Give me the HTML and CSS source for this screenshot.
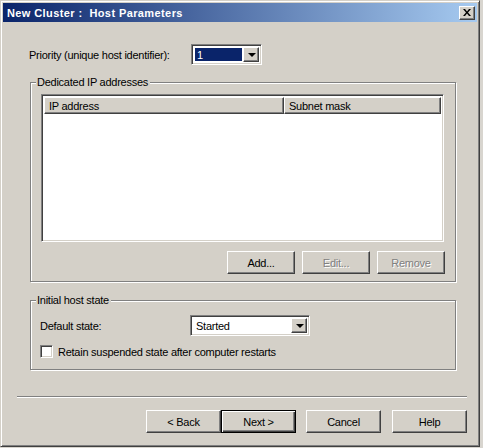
FILE: index.html
```html
<!DOCTYPE html>
<html>
<head>
<meta charset="utf-8">
<link rel="stylesheet" href="styles.css">
</head>
<body>
<div class="window">
  <div class="titlebar">
    <span class="title">New Cluster :&nbsp; Host Parameters</span>
    <span class="close raised">
      <svg width="8" height="7" viewBox="0 0 8 7"><path d="M0 0h2l2 2.5L6 0h2L5 3.5 8 7H6L4 4.5 2 7H0l3-3.5z" fill="#000"/></svg>
    </span>
  </div>
  <div class="content">
    <div class="priority">
      <span class="plabel">Priority (unique host identifier):</span>
      <div class="combo sunken combo-prio">
        <span class="field selected">1</span>
        <span class="arrow raised"><span class="tri"></span></span>
      </div>
    </div>

    <div class="group group-ip">
      <span class="legend">Dedicated IP addresses</span>
      <div class="list sunken">
        <div class="header">
          <div class="hcol hcol1 raised-h">IP address</div>
          <div class="hcol hcol2 raised-h">Subnet mask</div>
        </div>
      </div>
      <div class="btnrow">
        <span class="btn raised small">Add...</span>
        <span class="btn raised small disabled">Edit...</span>
        <span class="btn raised small disabled">Remove</span>
      </div>
    </div>

    <div class="group group-state">
      <span class="legend">Initial host state</span>
      <div class="staterow">
        <span class="slabel">Default state:</span>
        <div class="combo sunken combo-state">
          <span class="field">Started</span>
          <span class="arrow raised"><span class="tri"></span></span>
        </div>
      </div>
      <div class="checkrow">
        <span class="checkbox sunken"></span>
        <span class="ctext">Retain suspended state after computer restarts</span>
      </div>
    </div>

    <div class="sep"></div>

    <div class="footer">
      <span class="btn raised wide back">&lt; Back</span>
      <span class="btn wide default">Next &gt;</span>
      <span class="btn raised wide cancel">Cancel</span>
      <span class="btn raised wide help">Help</span>
    </div>
  </div>
</div>
</body>
</html>
```

FILE: styles.css
```css
html, body {
  margin: 0;
  padding: 0;
  background: #d8d5cf;
}
body {
  font-family: "Liberation Sans", Arial, sans-serif;
  font-size: 11px;
  letter-spacing: -0.25px;
  color: #000;
  width: 483px;
  height: 448px;
  overflow: hidden;
}
.window {
  box-sizing: border-box;
  width: 480px;
  height: 447px;
  background: #d4d0c8;
  border: 1px solid;
  border-color: #d4d0c8 #404040 #404040 #d4d0c8;
  box-shadow: inset 1px 1px 0 #fff, inset -1px -1px 0 #808080;
  padding: 2px;
}
.titlebar {
  height: 19px;
  background: linear-gradient(to right, #0a246a, #a6caf0);
  display: flex;
  align-items: center;
  justify-content: space-between;
  padding-left: 4px;
  padding-right: 2px;
}
.title {
  color: #fff;
  font-weight: bold;
  font-size: 11px;
  letter-spacing: 0.4px;
  white-space: pre;
}
.raised {
  border: 1px solid;
  border-color: #fff #404040 #404040 #fff;
  box-shadow: inset -1px -1px 0 #808080;
  background: #d4d0c8;
  box-sizing: border-box;
}
.sunken {
  border: 1px solid;
  border-color: #808080 #fff #fff #808080;
  box-shadow: inset 1px 1px 0 #404040, inset -1px -1px 0 #d4d0c8;
  box-sizing: border-box;
}
.close {
  width: 16px;
  height: 14px;
  display: flex;
  align-items: center;
  justify-content: center;
  padding-bottom: 1px;
  padding-right: 1px;
}
.close svg { display: block; }

.content {
  width: 474px;
}

/* priority row */
.priority {
  display: flex;
  align-items: center;
  margin-top: 22px;
  margin-left: 26px;
  height: 21px;
}
.plabel {
  width: 162px;
}
.combo {
  height: 21px;
  background: #fff;
  display: flex;
  align-items: stretch;
  padding: 2px;
}
.combo-prio { width: 71px; }
.combo-state { width: 120px; }
.field {
  flex: 1;
  display: flex;
  align-items: center;
  padding-left: 2px;
  margin: 1px;
}
.field.selected {
  background: #0a246a;
  color: #fff;
}
.arrow {
  width: 16px;
  display: flex;
  align-items: center;
  justify-content: center;
}
.tri {
  width: 0;
  height: 0;
  border-left: 4px solid transparent;
  border-right: 4px solid transparent;
  border-top: 4px solid #000;
  margin-left: 1px;
}

/* group boxes */
.group {
  position: relative;
  box-sizing: border-box;
  width: 426px;
  margin-left: 27px;
  border: 1px solid #808080;
  box-shadow: inset 1px 1px 0 #fff, 1px 1px 0 #fff;
}
.legend {
  position: absolute;
  top: -7px;
  left: 5px;
  background: #d4d0c8;
  padding: 0 2px 0 1px;
  line-height: 13px;
}
.group-ip {
  margin-top: 17px;
  height: 200px;
}
.group-state {
  margin-top: 18px;
  height: 70px;
}

.list {
  width: 403px;
  height: 148px;
  margin-top: 11px;
  margin-left: 10px;
  background: #fff;
  padding: 2px;
}
.header {
  display: flex;
  height: 17px;
}
.raised-h {
  box-sizing: border-box;
  border: 1px solid;
  border-color: #fff #404040 #404040 #fff;
  box-shadow: inset -1px -1px 0 #808080;
  background: #d4d0c8;
}
.hcol {
  display: flex;
  align-items: center;
  padding-left: 4px;
}
.hcol1 { width: 240px; }
.hcol2 { flex: 1; }

.btnrow {
  display: flex;
  justify-content: flex-end;
  gap: 7px;
  margin-top: 9px;
  padding-right: 10px;
}
.btn {
  box-sizing: border-box;
  height: 23px;
  display: flex;
  align-items: center;
  justify-content: center;
}
.small { width: 68px; }
.wide { width: 75px; }
.disabled {
  color: #808080;
  text-shadow: 1px 1px 0 #fff;
}
.default {
  border: 1px solid #000;
  background: #d4d0c8;
  box-shadow: inset 1px 1px 0 #fff, inset -1px -1px 0 #404040, inset -2px -2px 0 #808080;
}

.staterow {
  display: flex;
  align-items: center;
  margin-top: 14px;
  padding-left: 9px;
}
.slabel { width: 150px; }

.checkrow {
  display: flex;
  align-items: center;
  margin-top: 9px;
  padding-left: 9px;
  height: 13px;
}
.checkbox {
  width: 13px;
  height: 13px;
  background: #fff;
  margin-right: 5px;
}

.sep {
  margin-top: 26px;
  margin-left: 14px;
  width: 450px;
  height: 1px;
  background: #808080;
  border-bottom: 1px solid #fff;
}

.footer {
  display: flex;
  margin-top: 12px;
  margin-left: 143px;
}
.cancel { margin-left: 10px; }
.help { margin-left: 11px; }
```
